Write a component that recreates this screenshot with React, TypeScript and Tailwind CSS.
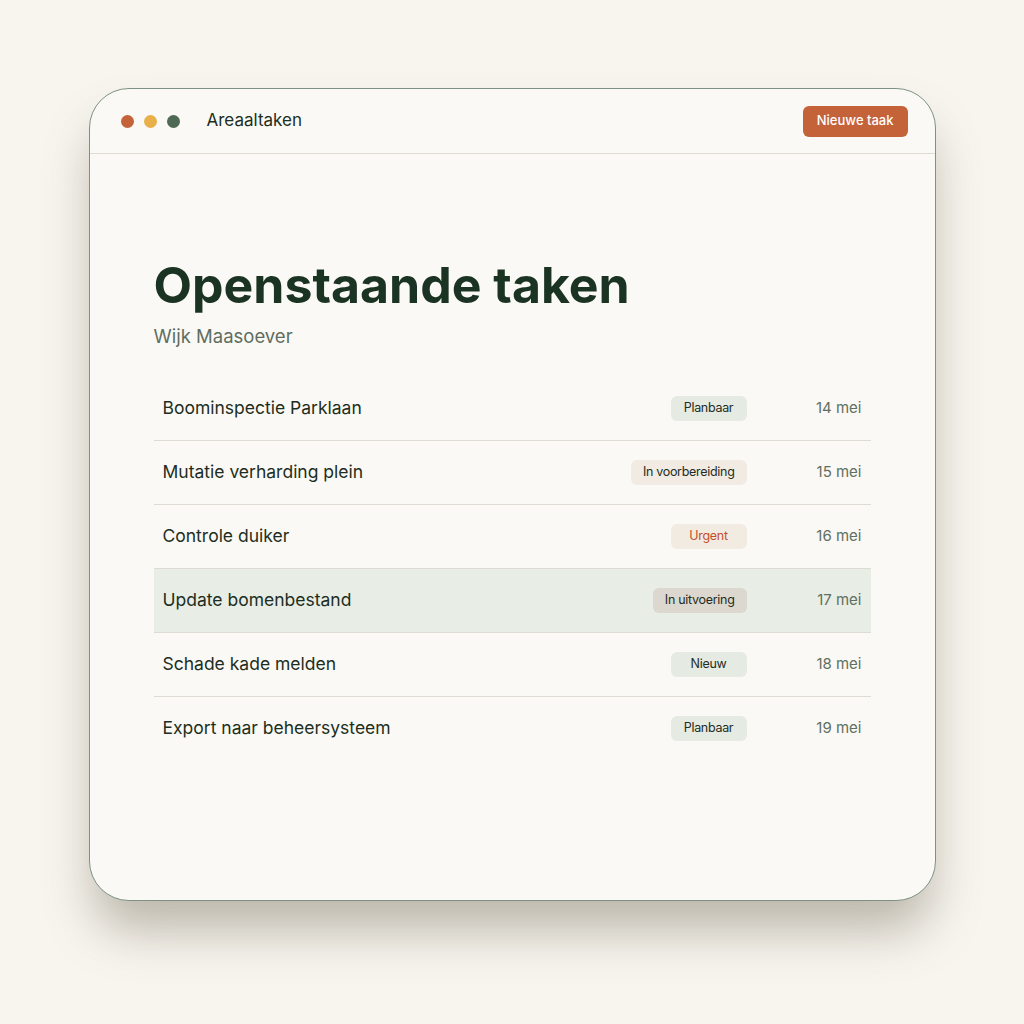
type Task = {
  id: number;
  title: string;
  status: string;
  date: string;
};

const tasks: Task[] = [
  { id: 1, title: "Boominspectie Parklaan", status: "Planbaar", date: "14 mei" },
  { id: 2, title: "Mutatie verharding plein", status: "In voorbereiding", date: "15 mei" },
  { id: 3, title: "Controle duiker", status: "Urgent", date: "16 mei" },
  { id: 4, title: "Update bomenbestand", status: "In uitvoering", date: "17 mei" },
  { id: 5, title: "Schade kade melden", status: "Nieuw", date: "18 mei" },
  { id: 6, title: "Export naar beheersysteem", status: "Planbaar", date: "19 mei" },
];

const badgeStyles: Record<string, string> = {
  Planbaar: "bg-[#e5eae2] text-[#1f2d22]",
  "In voorbereiding": "bg-[#f1ebe3] text-[#1f2d22]",
  Urgent: "bg-[#f1ebe2] text-[#c4502a]",
  "In uitvoering": "bg-[#dcd8cf] text-[#1f2d22]",
  Nieuw: "bg-[#e5eae2] text-[#1f2d22]",
};

const App = () => {
  const activeId = 4;

  return (
    <div className="min-h-screen w-full bg-[#f8f5ef] pt-[88px] pb-[120px] font-['Inter',sans-serif]">
      <div className="mx-auto flex h-[813px] w-[847px] flex-col overflow-hidden rounded-[40px] border border-[#7d9282] bg-[#fbf9f5] shadow-[0_34px_50px_-6px_rgba(110,105,85,0.45)]">
        {/* HEADER */}
        <div className="flex h-[65px] items-center justify-between border-b border-[#dedcd2] pl-[31px] pr-[27px]">
          <div className="flex items-center">
            <div className="flex gap-[10px]">
              <span className="h-[13px] w-[13px] rounded-full bg-[#c4623a]" />
              <span className="h-[13px] w-[13px] rounded-full bg-[#e9b04a]" />
              <span className="h-[13px] w-[13px] rounded-full bg-[#4e6a55]" />
            </div>
            <span className="ml-[27px] text-[17px] text-[#1c2e21]">Areaaltaken</span>
          </div>
          <button className="h-[31px] rounded-[6px] bg-[#c4623a] px-[14px] text-[13px] font-medium text-white">
            Nieuwe taak
          </button>
        </div>

        {/* CONTENT */}
        <div className="px-[64px] pt-[106px]">
          <h1 className="text-[50px] font-bold leading-[50px] text-[#1a3322]">Openstaande taken</h1>
          <p className="mt-[12px] text-[18.5px] leading-[28px] text-[#5d6e5f]">Wijk Maasoever</p>

          <div className="mt-[26px]">
            {tasks.map((task, i) => (
              <div
                key={task.id}
                className={`flex h-16 items-center px-[9px] ${i > 0 ? "border-t border-[#dedcd2]" : ""} ${
                  task.id === activeId ? "bg-[#e8ede6]" : ""
                }`}
              >
                <span className="flex-1 text-[17.5px] text-[#1c2e21]">{task.title}</span>
                <span
                  className={`flex h-[25px] min-w-[76px] items-center justify-center rounded-[6px] px-[12px] text-[12.5px] tracking-[-0.3px] ${badgeStyles[task.status]}`}
                >
                  {task.status}
                </span>
                <span className="w-[115px] text-right text-[15px] text-[#5f6f61]">{task.date}</span>
              </div>
            ))}
          </div>
        </div>
      </div>
    </div>
  );
};

export default App;
